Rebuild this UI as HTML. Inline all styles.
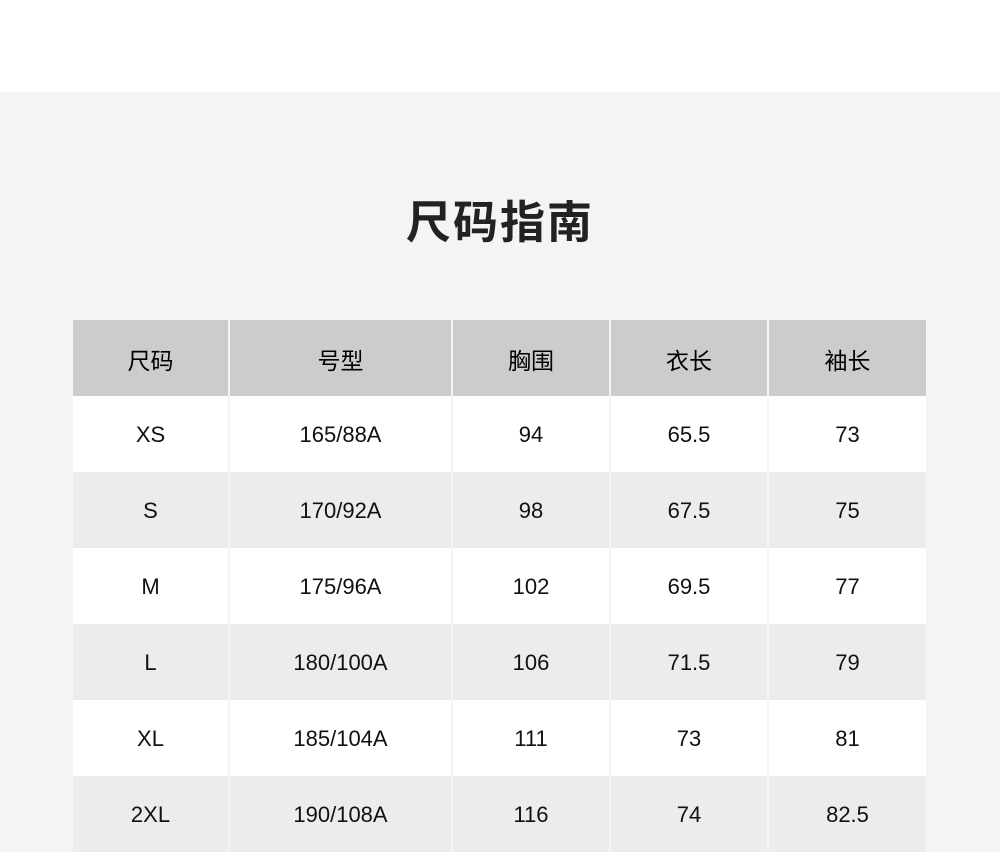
<!DOCTYPE html>
<html><head><meta charset="utf-8"><style>
body{margin:0;width:1000px;height:852px;overflow:hidden;background:#f4f4f4;font-family:"Liberation Sans","Noto Sans CJK SC",sans-serif;color:#111}
.top{height:92px;background:#fff}
h1{position:absolute;top:195px;left:0;width:1000px;text-align:center;margin:0;font-size:45px;font-weight:bold;color:#222;line-height:56px;letter-spacing:2px}
.row{position:absolute;left:73px;width:853px;height:76px;display:flex}
.c{height:76px;display:flex;align-items:center;justify-content:center;font-size:22px;border-right:2px solid #f4f4f4;box-sizing:border-box;padding-top:2px}
.c:last-child{border-right:none}
.h .c{font-size:23px;font-weight:normal;color:#000}
.w1{width:157px}.w2{width:223px}.w3{width:158px}.w4{width:158px}.w5{width:157px}
</style></head><body>
<div class="top"></div>
<h1>尺码指南</h1>
<div class="row h" style="top:320px;background:#cccccc"><div class="c w1">尺码</div><div class="c w2">号型</div><div class="c w3">胸围</div><div class="c w4">衣长</div><div class="c w5">袖长</div></div>
<div class="row" style="top:396px;background:#fff"><div class="c w1">XS</div><div class="c w2">165/88A</div><div class="c w3">94</div><div class="c w4">65.5</div><div class="c w5">73</div></div>
<div class="row" style="top:472px;background:#ececec"><div class="c w1">S</div><div class="c w2">170/92A</div><div class="c w3">98</div><div class="c w4">67.5</div><div class="c w5">75</div></div>
<div class="row" style="top:548px;background:#fff"><div class="c w1">M</div><div class="c w2">175/96A</div><div class="c w3">102</div><div class="c w4">69.5</div><div class="c w5">77</div></div>
<div class="row" style="top:624px;background:#ececec"><div class="c w1">L</div><div class="c w2">180/100A</div><div class="c w3">106</div><div class="c w4">71.5</div><div class="c w5">79</div></div>
<div class="row" style="top:700px;background:#fff"><div class="c w1">XL</div><div class="c w2">185/104A</div><div class="c w3">111</div><div class="c w4">73</div><div class="c w5">81</div></div>
<div class="row" style="top:776px;background:#ececec"><div class="c w1">2XL</div><div class="c w2">190/108A</div><div class="c w3">116</div><div class="c w4">74</div><div class="c w5">82.5</div></div>
</body></html>
